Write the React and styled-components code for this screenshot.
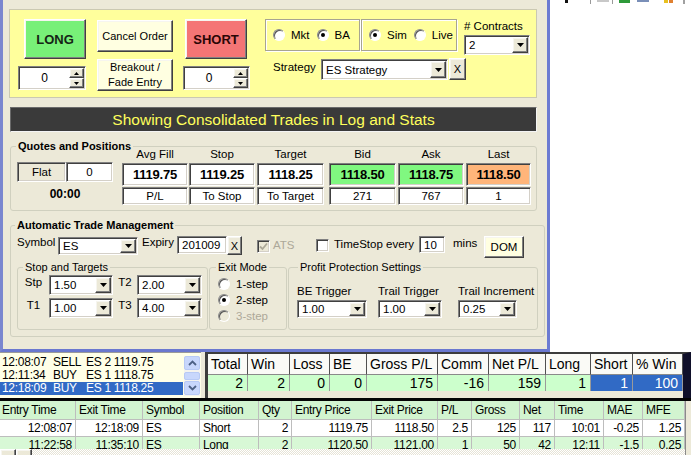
import React from 'react';
import styled, { createGlobalStyle, css } from 'styled-components';

const BEIGE = '#ECE9D8';
const FONT = '"Liberation Sans", Arial, sans-serif';

const GlobalStyle = createGlobalStyle`
  html, body { margin: 0; padding: 0; background: #fff; }
  body { font-family: ${FONT}; font-size: 11px; color: #000; }
  *, *::before, *::after { box-sizing: border-box; }
  button { font-family: inherit; }
`;

const sunken = css`
  border: 1px solid;
  border-color: #808080 #fff #fff #808080;
  box-shadow: inset 1px 1px 0 #404040, inset -1px -1px 0 #d4d0c8;
`;

const raised = css`
  border: 1px solid;
  border-color: #fff #404040 #404040 #fff;
  box-shadow: inset -1px -1px 0 #808080, inset 1px 1px 0 #f6f5ef;
`;

const Page = styled.div`
  width: 691px;
  height: 455px;
  overflow: hidden;
  background: #fff;
  display: flex;
  flex-direction: column;
`;

const TopArea = styled.div`
  display: flex;
  height: 352px;
  flex: none;
`;

const Window = styled.div`
  width: 550px;
  height: 352px;
  flex: none;
  background: ${BEIGE};
  border-left: 3px solid #7A86CF;
  border-right: 3px solid #6C7BD2;
  border-bottom: 3px solid #6A78CF;
  display: flex;
  flex-direction: column;
`;

const Desktop = styled.div`
  flex: 1;
  background: #fff;
  display: flex;
  flex-direction: column;
`;

/* ---------- order panel ---------- */
const OrderPanel = styled.div`
  flex: none;
  margin: 9px 0 0 6px;
  width: 528px;
  height: 89px;
  background: #FFFF9C;
  border: 1px solid #CBC9B2;
  display: flex;
  align-items: flex-start;
  padding: 9px 0 0 8px;
`;

const PanelCol = styled.div`
  flex: none;
  display: flex;
  flex-direction: column;
  width: ${p => (p.$w ? `${p.$w}px` : 'auto')};
  margin-left: ${p => p.$ml || 0}px;
`;

const ActionButton = styled.button`
  ${raised};
  flex: none;
  padding: 0;
  margin: ${p => p.$m || '0'};
  width: ${p => p.$w}px;
  height: ${p => p.$h}px;
  background: ${p => p.$bg};
  font-size: ${p => p.$fs || 11}px;
  font-weight: ${p => (p.$bold ? 700 : 400)};
  color: ${p => p.$color || '#000'};
  line-height: 15px;
  display: flex;
  align-items: center;
  justify-content: center;
  text-align: center;
`;

const SpinBox = styled.div`
  ${sunken};
  flex: none;
  background: #fff;
  display: flex;
  width: ${p => p.$w}px;
  height: 24px;
  margin-top: 7px;
  padding: 1px;
`;

const SpinValue = styled.div`
  flex: 1;
  display: flex;
  align-items: center;
  justify-content: center;
  font-size: 12px;
`;

const SpinButtons = styled.div`
  width: 15px;
  display: flex;
  flex-direction: column;
`;

const SpinButton = styled.div`
  ${raised};
  flex: 1;
  background: ${BEIGE};
  display: flex;
  align-items: center;
  justify-content: center;
`;

const PanelRow = styled.div`
  display: flex;
  align-items: flex-start;
  margin-top: ${p => p.$mt || 0}px;
`;

const OptionGroup = styled.div`
  flex: none;
  width: ${p => p.$w}px;
  height: 32px;
  margin-left: ${p => p.$ml || 0}px;
  border: 1px solid #A7A591;
  box-shadow: inset 1px 1px 0 #fff, 1px 1px 0 #fff;
  display: flex;
  align-items: center;
  padding-left: 7px;
  gap: 7px;
`;

const OptionItem = styled.div`
  display: flex;
  align-items: center;
  gap: 6px;
  font-size: 11.5px;
  color: ${p => (p.$disabled ? '#ACA899' : '#000')};
`;

const RadioCircle = styled.span`
  flex: none;
  width: 12px;
  height: 12px;
  border-radius: 50%;
  background: ${p => (p.$disabled ? BEIGE : '#fff')};
  border: 1px solid;
  border-color: #8a8a8a #fff #fff #8a8a8a;
  box-shadow: inset 1px 1px 0 #555;
  display: flex;
  align-items: center;
  justify-content: center;
  &::after {
    content: '';
    width: 4px;
    height: 4px;
    border-radius: 50%;
    background: #000;
    display: ${p => (p.$checked ? 'block' : 'none')};
  }
`;

const ContractsBlock = styled.div`
  margin-left: 7px;
  display: flex;
  flex-direction: column;
  padding-top: 1px;
`;

const FieldLabel = styled.span`
  flex: none;
  display: block;
  width: ${p => (p.$w ? `${p.$w}px` : 'auto')};
  margin-top: ${p => p.$mt || 0}px;
  margin-left: ${p => p.$ml || 0}px;
  line-height: 13px;
  font-size: ${p => p.$fs || 11}px;
  text-align: ${p => p.$align || 'left'};
  color: ${p => (p.$disabled ? '#ACA899' : '#000')};
  white-space: nowrap;
`;

const ComboBox = styled.div`
  ${sunken};
  flex: none;
  background: #fff;
  display: flex;
  width: ${p => p.$w}px;
  height: ${p => p.$h}px;
  margin-top: ${p => p.$mt || 0}px;
  margin-left: ${p => p.$ml || 0}px;
  padding: 1px;
`;

const ComboText = styled.div`
  flex: 1;
  padding-left: 3px;
  display: flex;
  align-items: center;
  font-size: 11.5px;
  white-space: nowrap;
  overflow: hidden;
`;

const ComboBtn = styled.div`
  ${raised};
  width: 16px;
  background: ${BEIGE};
  display: flex;
  align-items: center;
  justify-content: center;
`;

const TextField = styled.div`
  ${sunken};
  flex: none;
  background: #fff;
  width: ${p => p.$w}px;
  height: ${p => p.$h}px;
  margin-left: ${p => p.$ml || 0}px;
  padding-left: 4px;
  display: flex;
  align-items: center;
  font-size: 11.5px;
`;

const SmallButton = styled.div`
  ${raised};
  flex: none;
  width: ${p => p.$w}px;
  height: ${p => p.$h}px;
  margin-top: ${p => p.$mt || 0}px;
  margin-left: ${p => p.$ml || 0}px;
  background: ${BEIGE};
  display: flex;
  align-items: center;
  justify-content: center;
  font-size: 11px;
`;

const CheckBox = styled.span`
  ${sunken};
  flex: none;
  width: 13px;
  height: 13px;
  margin-top: ${p => p.$mt || 0}px;
  margin-left: ${p => p.$ml || 0}px;
  background: ${p => (p.$disabled ? BEIGE : '#fff')};
  display: flex;
  align-items: center;
  justify-content: center;
`;

/* ---------- banner & groups ---------- */
const Banner = styled.div`
  flex: none;
  margin: 9px 0 0 7px;
  width: 527px;
  height: 25px;
  background: #3A3A3A;
  border: 1px solid;
  border-color: #6a6a6a #f4f4f4 #f4f4f4 #6a6a6a;
  color: #FFFF5C;
  font-size: 15.5px;
  display: flex;
  align-items: center;
  justify-content: center;
`;

const GroupBox = styled.div`
  position: relative;
  flex: none;
  width: ${p => p.$w}px;
  height: ${p => p.$h}px;
  margin: ${p => p.$m || '0'};
  border: 1px solid #D0D0BF;
  border-radius: 3px;
`;

const GroupTitle = styled.span`
  position: absolute;
  top: -7px;
  left: ${p => p.$left}px;
  padding: 0 2px;
  background: ${BEIGE};
  line-height: 12px;
  font-size: 11px;
  font-weight: ${p => (p.$bold ? 700 : 400)};
  white-space: nowrap;
`;

const QuotesBody = styled.div`
  display: flex;
  align-items: flex-start;
  padding: 1px 0 0 6px;
`;

const PositionBlock = styled.div`
  flex: none;
  width: 96px;
  margin-top: 14px;
  display: flex;
  flex-direction: column;
`;

const PositionRow = styled.div`
  display: flex;
`;

const PositionBox = styled.div`
  ${sunken};
  width: ${p => p.$w}px;
  height: 20px;
  background: ${p => p.$bg};
  display: flex;
  align-items: center;
  justify-content: center;
  font-size: 11.5px;
`;

const Timer = styled.div`
  margin-top: 5px;
  line-height: 15px;
  text-align: center;
  font-size: 12px;
  font-weight: 700;
`;

const QuoteColumns = styled.div`
  display: flex;
  margin-left: 9px;
`;

const QuoteCol = styled.div`
  flex: none;
  width: ${p => p.$w}px;
  margin-left: ${p => p.$ml || 0}px;
  display: flex;
  flex-direction: column;
`;

const QuoteHead = styled.div`
  height: 15px;
  line-height: 13px;
  text-align: center;
  font-size: 11.5px;
`;

const QuoteValue = styled.div`
  ${sunken};
  height: 23px;
  background: ${p => p.$bg};
  display: flex;
  align-items: center;
  justify-content: center;
  font-size: 13px;
  font-weight: 700;
  letter-spacing: -0.2px;
`;

const QuoteSub = styled.div`
  ${sunken};
  margin-top: 1px;
  height: 18px;
  background: #fff;
  display: flex;
  align-items: center;
  justify-content: center;
  font-size: 11.5px;
`;

const AtmRow = styled.div`
  display: flex;
  align-items: flex-start;
  padding-left: 6px;
  padding-top: ${p => p.$pt || 0}px;
  margin-top: ${p => p.$mt || 0}px;
`;

const StopGrid = styled.div`
  display: grid;
  grid-template-columns: 31px 64px 24px 65px;
  grid-auto-rows: 20px;
  row-gap: 3px;
  padding-top: 7px;
`;

const ExitList = styled.div`
  display: flex;
  flex-direction: column;
  gap: 4px;
  padding: 10px 0 0 8px;
`;

const ProfitGrid = styled.div`
  display: grid;
  grid-template-columns: 81px 80px 1fr;
  padding: 17px 0 0 8px;
`;

const ProfitCell = styled.div`
  display: flex;
  flex-direction: column;
`;

/* ---------- bottom ---------- */
const MiddleRow = styled.div`
  flex: none;
  display: flex;
  height: 46px;
  background: ${BEIGE};
`;

const LogList = styled.div`
  flex: none;
  width: 201px;
  background: #FFFFE8;
  border-top: 1px solid #9a9a9a;
  display: flex;
`;

const LogRows = styled.div`
  flex: 1;
  padding-top: 3px;
`;

const LogRow = styled.div`
  display: grid;
  grid-template-columns: 51px 33px auto;
  height: 13px;
  line-height: 13px;
  padding-left: 2px;
  font-size: 12px;
  letter-spacing: -0.3px;
  white-space: nowrap;
  background: ${p => (p.$sel ? '#316AC5' : 'transparent')};
  color: ${p => (p.$sel ? '#fff' : '#000')};
`;

const LogScroll = styled.div`
  flex: none;
  width: 16px;
  margin: 3px 1px 2px 1px;
  display: flex;
  flex-direction: column;
  background: #F4F3EE;
`;

const ScrollBtn = styled.div`
  height: ${p => p.$h}px;
  margin-top: ${p => p.$mt || 0}px;
  border: 1px solid #B8CAF5;
  border-radius: 2px;
  background: #C8D7FC;
  display: flex;
  align-items: center;
  justify-content: center;
`;

const StatsBox = styled.div`
  flex: none;
  width: 486px;
  margin-left: 4px;
  background: ${BEIGE};
  border-left: 3px solid #3c3c3c;
  border-top: 2px solid #3c3c3c;
  border-right: 8px solid #10102A;
`;

const StatsGrid = styled.div`
  display: grid;
  grid-template-columns: 40px 42px 40px 37px 71px 51px 57px 45px 42px 50px;
`;

const StatsHead = styled.div`
  height: 21px;
  line-height: 20px;
  padding-left: 3px;
  background: #FAFAF6;
  border-right: 1px solid #505050;
  border-bottom: 1px solid #8a8a8a;
  font-size: 14px;
  white-space: nowrap;
  overflow: hidden;
`;

const StatsVal = styled.div`
  height: 16px;
  line-height: 16px;
  text-align: right;
  padding-right: 4px;
  font-size: 14px;
  background: ${p => (p.$sel ? '#316AC5' : '#CCFFCC')};
  color: ${p => (p.$sel ? '#fff' : '#000')};
  border-right: 1px solid #9a9a9a;
`;

const BlackSplit = styled.div`
  flex: none;
  height: 3px;
  background: #050505;
`;

const TradesArea = styled.div`
  flex: none;
  display: flex;
  height: 54px;
  overflow: hidden;
`;

const TradesTable = styled.div`
  flex: none;
  width: 685px;
  display: flex;
  flex-direction: column;
`;

const TradeRow = styled.div`
  display: grid;
  grid-template-columns: 76px 67px 57px 59px 33px 80px 66px 34px 48px 35px 49px 39px 42px;
  height: ${p => p.$h}px;
  line-height: ${p => p.$h - 1}px;
  background: ${p => p.$bg};
  flex: none;
`;

const TradeCell = styled.div`
  border-right: 1px solid #BDBDBD;
  border-bottom: 1px solid #BDBDBD;
  padding: 0 3px 0 ${p => (p.$first ? 2 : 3)}px;
  text-align: ${p => (p.$right ? 'right' : 'left')};
  font-size: 12px;
  letter-spacing: -0.3px;
  white-space: nowrap;
  overflow: hidden;
`;

const TradesBody = styled.div`
  height: 29px;
  overflow: hidden;
  flex: none;
`;

const HScroll = styled.div`
  flex: none;
  height: 17px;
  display: flex;
  background: repeating-conic-gradient(#fff 0 25%, #E6E3D6 0 50%) 0 0 / 2px 2px;
`;

const HScrollBtn = styled.div`
  ${raised};
  width: ${p => p.$w}px;
  background: ${BEIGE};
`;

const VStub = styled.div`
  flex: 1;
  background: ${BEIGE};
  border-left: 1px solid #8a8a8a;
`;

/* ---------- small drawings ---------- */
const TriDown = ({ w = 7, h = 4, color = '#000' }) => (
  <svg width={w} height={h} viewBox={`0 0 ${w} ${h}`}>
    <path d={`M0 0H${w}L${w / 2} ${h}Z`} fill={color} />
  </svg>
);
const TriUp = ({ w = 7, h = 4, color = '#000' }) => (
  <svg width={w} height={h} viewBox={`0 0 ${w} ${h}`}>
    <path d={`M0 ${h}H${w}L${w / 2} 0Z`} fill={color} />
  </svg>
);
const Chevron = ({ up }) => (
  <svg width="9" height="6" viewBox="0 0 9 6">
    <path d={up ? 'M1 5 L4.5 1.5 L8 5' : 'M1 1 L4.5 4.5 L8 1'} fill="none" stroke="#4D6185" strokeWidth="1.8" />
  </svg>
);
const CheckMark = ({ color }) => (
  <svg width="9" height="9" viewBox="0 0 9 9">
    <path d="M1 4.5 L3.5 7 L8 1.5" fill="none" stroke={color} strokeWidth="1.8" />
  </svg>
);
const TrayStrip = () => (
  <svg width="141" height="5" viewBox="0 0 141 5">
    <rect x="15" y="0" width="3" height="3" fill="#111" />
    <rect x="40" y="0" width="1" height="4" fill="#9a9a9a" />
    <rect x="47" y="0" width="12" height="2" fill="#c8c8c8" />
    <rect x="62" y="0" width="1" height="4" fill="#9a9a9a" />
    <rect x="69" y="0" width="11" height="3" fill="#2E9A3A" />
    <rect x="87" y="0" width="12" height="2" fill="#7a8fb8" />
    <rect x="114" y="0" width="4" height="3" fill="#E8C020" />
    <rect x="119" y="0" width="4" height="3" fill="#E08030" />
    <rect x="133" y="0" width="2" height="4" fill="#a0a0a0" />
  </svg>
);

/* ---------- composites ---------- */
function Combo({ value, w, h = 20, mt, ml }) {
  return (
    <ComboBox $w={w} $h={h} $mt={mt} $ml={ml}>
      <ComboText>{value}</ComboText>
      <ComboBtn>
        <TriDown />
      </ComboBtn>
    </ComboBox>
  );
}

function Spinner({ w }) {
  return (
    <SpinBox $w={w}>
      <SpinValue>0</SpinValue>
      <SpinButtons>
        <SpinButton>
          <TriUp w={5} h={3} />
        </SpinButton>
        <SpinButton>
          <TriDown w={5} h={3} />
        </SpinButton>
      </SpinButtons>
    </SpinBox>
  );
}

function Radio({ label, checked, disabled }) {
  return (
    <OptionItem $disabled={disabled}>
      <RadioCircle $checked={checked} $disabled={disabled} />
      <span>{label}</span>
    </OptionItem>
  );
}

const quotes = [
  { head: 'Avg Fill', value: '1119.75', sub: 'P/L', w: 66, ml: 0, bg: '#fff' },
  { head: 'Stop', value: '1119.25', sub: 'To Stop', w: 66, ml: 1, bg: '#fff' },
  { head: 'Target', value: '1118.25', sub: 'To Target', w: 67, ml: 2, bg: '#fff' },
  { head: 'Bid', value: '1118.50', sub: '271', w: 67, ml: 5, bg: '#80F880' },
  { head: 'Ask', value: '1118.75', sub: '767', w: 66, ml: 2, bg: '#80F880' },
  { head: 'Last', value: '1118.50', sub: '1', w: 65, ml: 2, bg: '#FFB57A' },
];

const logs = [
  ['12:08:07', 'SELL', 'ES 2 1119.75', false],
  ['12:11:34', 'BUY', 'ES 1 1118.75', false],
  ['12:18:09', 'BUY', 'ES 1 1118.25', true],
];

const stats = [
  ['Total', '2'],
  ['Win', '2'],
  ['Loss', '0'],
  ['BE', '0'],
  ['Gross P/L', '175'],
  ['Comm', '-16'],
  ['Net P/L', '159'],
  ['Long', '1'],
  ['Short', '1', true],
  ['% Win', '100', true],
];

const tradeHead = ['Entry Time', 'Exit Time', 'Symbol', 'Position', 'Qty', 'Entry Price', 'Exit Price', 'P/L', 'Gross', 'Net', 'Time', 'MAE', 'MFE'];
const rightCols = [true, true, false, false, true, true, true, true, true, true, true, true, true];
const trades = [
  { bg: '#fff', cells: ['12:08:07', '12:18:09', 'ES', 'Short', '2', '1119.75', '1118.50', '2.5', '125', '117', '10:01', '-0.25', '1.25'] },
  { bg: '#D8F8D6', cells: ['11:22:58', '11:35:10', 'ES', 'Long', '2', '1120.50', '1121.00', '1', '50', '42', '12:11', '-1.5', '0.25'] },
];

export default function App() {
  return (
    <Page>
      <GlobalStyle />
      <TopArea>
        <Window>
          <OrderPanel>
            <PanelCol $w={68}>
              <ActionButton $w={62} $h={40} $m="0 0 0 6px" $bg="#78F078" $fs={13} $bold $color="#152515">
                LONG
              </ActionButton>
              <Spinner w={68} />
            </PanelCol>
            <PanelCol $w={76} $ml={11}>
              <ActionButton $w={76} $h={32} $m="1px 0 0 0" $bg="#FFFFE1">
                Cancel Order
              </ActionButton>
              <ActionButton $w={76} $h={32} $m="7px 0 0 0" $bg="#FFFFE1">
                Breakout /<br />Fade Entry
              </ActionButton>
            </PanelCol>
            <PanelCol $w={67} $ml={10}>
              <ActionButton $w={62} $h={40} $m="0 0 0 2px" $bg="#F47575" $fs={13} $bold $color="#2a0606">
                SHORT
              </ActionButton>
              <Spinner w={67} />
            </PanelCol>
            <PanelCol $ml={15}>
              <PanelRow>
                <OptionGroup $w={95}>
                  <Radio label="Mkt" />
                  <Radio label="BA" checked />
                </OptionGroup>
                <OptionGroup $w={96} $ml={1}>
                  <Radio label="Sim" checked />
                  <Radio label="Live" />
                </OptionGroup>
                <ContractsBlock>
                  <FieldLabel $fs={11.5}># Contracts</FieldLabel>
                  <Combo value="2" w={66} h={20} mt={2} />
                </ContractsBlock>
              </PanelRow>
              <PanelRow $mt={4}>
                <FieldLabel $ml={8} $mt={2} $w={40} $fs={11.5}>Strategy</FieldLabel>
                <Combo value="ES Strategy" w={127} h={21} ml={8} />
                <SmallButton $w={17} $h={22} $ml={1} $mt={-1}>X</SmallButton>
              </PanelRow>
            </PanelCol>
          </OrderPanel>

          <Banner>Showing Consolidated Trades in Log and Stats</Banner>

          <GroupBox $w={527} $h={65} $m="14px 0 0 7px">
            <GroupTitle $left={5} $bold>Quotes and Positions</GroupTitle>
            <QuotesBody>
              <PositionBlock>
                <PositionRow>
                  <PositionBox $w={49} $bg={BEIGE}>Flat</PositionBox>
                  <PositionBox $w={47} $bg="#fff">0</PositionBox>
                </PositionRow>
                <Timer>00:00</Timer>
              </PositionBlock>
              <QuoteColumns>
                {quotes.map(q => (
                  <QuoteCol key={q.head} $w={q.w} $ml={q.ml}>
                    <QuoteHead>{q.head}</QuoteHead>
                    <QuoteValue $bg={q.bg}>{q.value}</QuoteValue>
                    <QuoteSub>{q.sub}</QuoteSub>
                  </QuoteCol>
                ))}
              </QuoteColumns>
            </QuotesBody>
          </GroupBox>

          <GroupBox $w={535} $h={112} $m="14px 0 0 7px">
            <GroupTitle $left={4} $bold>Automatic Trade Management</GroupTitle>
            <AtmRow $pt={10}>
              <FieldLabel $w={41} $fs={11.5}>Symbol</FieldLabel>
              <Combo value="ES" w={80} h={18} mt={1} />
              <FieldLabel $w={35} $ml={4} $fs={11.5}>Expiry</FieldLabel>
              <TextField $w={50} $h={18}>201009</TextField>
              <SmallButton $w={15} $h={19}>X</SmallButton>
              <CheckBox $disabled $mt={4} $ml={15}>
                <CheckMark color="#ACA899" />
              </CheckBox>
              <FieldLabel $w={43} $ml={3} $mt={3} $disabled $fs={11.5}>ATS</FieldLabel>
              <CheckBox $mt={3} />
              <FieldLabel $w={85} $ml={5} $mt={2} $fs={11.5}>TimeStop every</FieldLabel>
              <TextField $w={26} $h={17}>10</TextField>
              <FieldLabel $w={31} $ml={8} $mt={1} $fs={11.5}>mins</FieldLabel>
              <ActionButton $w={40} $h={22} $bg="#FFFFE1" $fs={11.5}>DOM</ActionButton>
            </AtmRow>
            <AtmRow $mt={9}>
              <GroupBox $w={191} $h={63}>
                <GroupTitle $left={5}>Stop and Targets</GroupTitle>
                <StopGrid>
                  <FieldLabel $align="center" $mt={1} $fs={11.5}>Stp</FieldLabel>
                  <Combo value="1.50" w={64} h={20} />
                  <FieldLabel $align="center" $mt={1} $fs={11.5}>T2</FieldLabel>
                  <Combo value="2.00" w={65} h={20} />
                  <FieldLabel $align="center" $mt={1} $fs={11.5}>T1</FieldLabel>
                  <Combo value="1.00" w={64} h={20} />
                  <FieldLabel $align="center" $mt={1} $fs={11.5}>T3</FieldLabel>
                  <Combo value="4.00" w={65} h={20} />
                </StopGrid>
              </GroupBox>
              <GroupBox $w={78} $h={63} $m="0 0 0 1px">
                <GroupTitle $left={6}>Exit Mode</GroupTitle>
                <ExitList>
                  <Radio label="1-step" />
                  <Radio label="2-step" checked />
                  <Radio label="3-step" disabled />
                </ExitList>
              </GroupBox>
              <GroupBox $w={250} $h={63} $m="0 0 0 1px">
                <GroupTitle $left={9}>Profit Protection Settings</GroupTitle>
                <ProfitGrid>
                  <ProfitCell>
                    <FieldLabel $fs={11.5}>BE Trigger</FieldLabel>
                    <Combo value="1.00" w={70} h={18} mt={2} />
                  </ProfitCell>
                  <ProfitCell>
                    <FieldLabel $fs={11.5}>Trail Trigger</FieldLabel>
                    <Combo value="1.00" w={64} h={18} mt={2} />
                  </ProfitCell>
                  <ProfitCell>
                    <FieldLabel $fs={11.5}>Trail Increment</FieldLabel>
                    <Combo value="0.25" w={59} h={18} mt={2} />
                  </ProfitCell>
                </ProfitGrid>
              </GroupBox>
            </AtmRow>
          </GroupBox>
        </Window>
        <Desktop>
          <TrayStrip />
        </Desktop>
      </TopArea>

      <MiddleRow>
        <LogList>
          <LogRows>
            {logs.map(([t, a, d, sel]) => (
              <LogRow key={t} $sel={sel}>
                <span>{t}</span>
                <span>{a}</span>
                <span>{d}</span>
              </LogRow>
            ))}
          </LogRows>
          <LogScroll>
            <ScrollBtn $h={14}>
              <Chevron up />
            </ScrollBtn>
            <ScrollBtn $h={8} $mt={2} />
            <ScrollBtn $h={14} $mt={1}>
              <Chevron />
            </ScrollBtn>
          </LogScroll>
        </LogList>
        <StatsBox>
          <StatsGrid>
            {stats.map(([h]) => (
              <StatsHead key={h}>{h}</StatsHead>
            ))}
            {stats.map(([h, v, sel]) => (
              <StatsVal key={h} $sel={sel}>{v}</StatsVal>
            ))}
          </StatsGrid>
        </StatsBox>
      </MiddleRow>

      <BlackSplit />

      <TradesArea>
        <TradesTable>
          <TradeRow $h={19} $bg="#D2F4D0">
            {tradeHead.map((h, i) => (
              <TradeCell key={h} $first={i === 0}>{h}</TradeCell>
            ))}
          </TradeRow>
          <TradesBody>
            {trades.map((r, ri) => (
              <TradeRow key={ri} $h={17} $bg={r.bg}>
                {r.cells.map((c, i) => (
                  <TradeCell key={i} $right={rightCols[i]} $first={i === 0}>{c}</TradeCell>
                ))}
              </TradeRow>
            ))}
          </TradesBody>
          <HScroll>
            <HScrollBtn $w={16} />
            <HScrollBtn $w={16} />
          </HScroll>
        </TradesTable>
        <VStub />
      </TradesArea>
    </Page>
  );
}
